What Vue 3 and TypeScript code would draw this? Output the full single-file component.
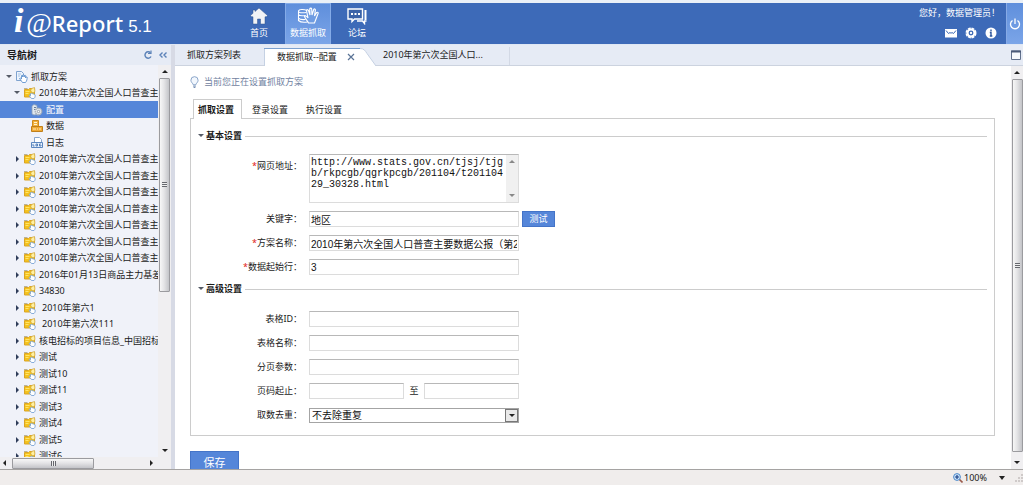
<script setup lang="ts">
import { ref } from 'vue'

interface TreeNode {
  label: string
  level: number
  icon: string
  state: 'open' | 'closed' | 'leaf'
  indent?: boolean
}

const censusName = '2010年第六次全国人口普查主'

const closed = (label: string, indent = false): TreeNode => ({
  label,
  level: 1,
  icon: 'folder',
  state: 'closed',
  indent,
})

const nodes: TreeNode[] = [
  { label: '抓取方案', level: 0, icon: 'root', state: 'open' },
  { label: censusName, level: 1, icon: 'folder', state: 'open' },
  { label: '配置', level: 2, icon: 'config', state: 'leaf' },
  { label: '数据', level: 2, icon: 'data', state: 'leaf' },
  { label: '日志', level: 2, icon: 'log', state: 'leaf' },
  ...Array.from({ length: 7 }, () => closed(censusName)),
  closed('2016年01月13日商品主力基差'),
  closed('34830'),
  closed('2010年第六1', true),
  closed('2010年第六次111', true),
  closed('核电招标的项目信息_中国招标'),
  closed('测试'),
  closed('测试10'),
  closed('测试11'),
  closed('测试3'),
  closed('测试4'),
  closed('测试5'),
  closed('测试6'),
]

const selected = ref(2)
const url = ref('http://www.stats.gov.cn/tjsj/tjgb/rkpcgb/qgrkpcgb/201104/t20110429_30328.html')
const keyword = ref('地区')
const planName = ref('2010年第六次全国人口普查主要数据公报（第2号）')
const startRow = ref('3')
const tableId = ref('')
const tableName = ref('')
const pageParam = ref('')
const pageFrom = ref('')
const pageTo = ref('')
const dedupe = ref('none')
</script>

<template>
  <div class="app">
    <svg class="defs" aria-hidden="true">
      <symbol id="i-folder" viewBox="0 0 12 12">
        <path d="M.5 2.500h4l1-1h5v8.500h-10z" fill="#f5c21c" stroke="#d9a425" />
        <path d="M1.500 4.500h4M1.500 6.500h3" stroke="#ffe468" fill="none" />
        <path d="M0 1.500h3.500" stroke="#b9b29a" fill="none" />
        <path d="M6.500 4l1-2.500L10.500.5l.5 4-2 1.500z" fill="#fff0a0" stroke="#cda23a" stroke-width=".7" />
        <path d="M5 8.500c1-.8 1.500.3 1.500.3V6.500c.7-.7 1.400 0 1.400 0l2.600.8c1 .4 1 3-.5 4.200H7.500z" fill="#fff" stroke="#6d9bd3" stroke-width=".8" />
      </symbol>
      <symbol id="i-root" viewBox="0 0 12 12">
        <path d="M.5.5h5l2 2v7h-7z" fill="#edf4fd" stroke="#7fa3cf" />
        <path d="M2 3h3M2 5h2" stroke="#a8c3e5" fill="none" />
        <path d="M3.500 7.500c1-1 2 .5 2 .5V4.500c.6-.7 1.200 0 1.200 0V6l.2-2c.6-.6 1.200 0 1.200 0v2l.4-1.500c.6-.5 1.100 0 1.100 0V7l.5-1c.8-.5 1.100.2 1.100.2 0 2-.4 3.800-1.700 5.300H6.500z" fill="#fff" stroke="#4f86c8" stroke-width=".8" />
      </symbol>
      <symbol id="i-config" viewBox="0 0 12 12">
        <path d="M1 2l2-1.500 3 1v9l-3 .5-2-1z" fill="#dfe7f0" stroke="#8ba0b8" stroke-width=".8" />
        <path d="M3 3.500h2M3 5.500h2" stroke="#667d98" />
        <circle cx="7.500" cy="7.500" r="3.200" fill="#e9edf2" stroke="#a9b1ba" stroke-width="1.400" stroke-dasharray="1.700 .5" />
        <circle cx="7.500" cy="7.500" r="1.200" fill="#fff" stroke="#6f7d8d" stroke-width=".7" />
      </symbol>
      <symbol id="i-data" viewBox="0 0 12 12">
        <path d="M1.500.5h6v7h-6z" fill="#f2b13c" stroke="#cf8a1d" />
        <path d="M3 2.500h3M3 4.500h3" stroke="#fff3cf" />
        <path d="M.5 6.500h11v5H.5z" fill="#f0aa35" stroke="#c07f1a" />
        <path d="M2 9h3M6 9h1M8 9h2" stroke="#ffe9b8" />
      </symbol>
      <symbol id="i-log" viewBox="0 0 12 12">
        <path d="M3.500.5h5l2 2v5h-7z" fill="#fff" stroke="#87a5cc" />
        <path d="M.5 5.500h11v5H.5z" fill="#eaf2fc" stroke="#5b87c0" />
        <path d="M2 7v2h1.500M5 7h1.500v2H5zM10 7H8.500v2H10V8" stroke="#396bad" fill="none" stroke-width=".8" />
      </symbol>
    </svg>

    <header class="topbar">
      <h1 class="logo"><span class="logo-i">i</span><span class="logo-at">@</span><span class="logo-name">Report</span><span class="logo-ver">5.1</span></h1>
      <nav class="nav" aria-label="主导航">
        <a href="#" class="nav-item">
          <svg class="nav-icon" viewBox="0 0 24 18">
            <path d="M12 1l8.500 7.500-1 1.300H18V17h-4.500v-5h-3v5H6V9.800H4.500l-1-1.300L6 6.300V3h2v1.500z" fill="#f1f3f6" stroke="#31558f" stroke-width=".5" />
          </svg>
          <span>首页</span>
        </a>
        <a href="#" class="nav-item active" aria-current="page">
          <svg class="nav-icon" viewBox="0 0 24 18" fill="none" stroke="#fff" stroke-width="1.100">
            <path d="M11 3.500C8 2 3 2 2.500 4s4 2 8 1.500M2.500 4.500v3c1 1.500 4 1.500 7 1M2.500 8v3c1 1.500 4 1.800 7 1.500M2.500 11.500v2c2 2 6 2 9 1.500" />
            <path d="M12.500 16c-1-2-3-4-4-6.500 1-1.300 2.300-.2 3.500 1.500L10.500 3.500c.5-1.200 1.600-1 2 0L14 8l-.3-6c.4-1.200 1.700-1.200 2 0L16 8l1.700-5.500c.6-1 1.700-.6 1.700.4L18.500 9l2.200-3.500c1-.7 1.800.1 1.400 1L20 12l-1.500 4z" fill="#6f9ce2" />
          </svg>
          <span>数据抓取</span>
        </a>
        <a href="#" class="nav-item">
          <svg class="nav-icon" viewBox="0 0 24 18" fill="none" stroke="#fff" stroke-width="1.400">
            <path d="M3 2h14.500v10H9.500L7 14.500V12H3z" fill="#3a62a8" />
            <path d="M20.500 3v10" stroke-width="2" />
            <path d="M12 14h5.500l2 2.500V14h2" />
            <path d="M6 7h2M9.500 7h2M13 7h2" stroke-width="1.800" />
          </svg>
          <span>论坛</span>
        </a>
      </nav>
      <div class="user">
        <p class="hello">您好，数据管理员！</p>
        <div class="user-tools">
          <button type="button" aria-label="消息">
            <svg viewBox="0 0 12 12"><path d="M0 2h12v8.500H0z" fill="#fff" /><path d="M1 3.500l2.500 3 1.500-1 1 .8 1-.8 1.500 1 2.500-3" fill="none" stroke="#3c69b6" /></svg>
          </button>
          <button type="button" aria-label="设置">
            <svg viewBox="0 0 12 12"><circle cx="6" cy="6" r="4.500" fill="#fff" /><circle cx="6" cy="6" r="4.800" fill="none" stroke="#fff" stroke-width="1.400" stroke-dasharray="2.900 .87" /><circle cx="6" cy="6" r="1.800" fill="#fff" stroke="#3c69b6" stroke-width="1.300" /></svg>
          </button>
          <button type="button" aria-label="关于">
            <svg viewBox="0 0 12 12"><circle cx="6" cy="6" r="5.500" fill="#fff" /><path d="M6 2.500v1.700M4.800 5.500H6V9M4.800 9h2.500" fill="none" stroke="#2c559d" stroke-width="1.400" /></svg>
          </button>
        </div>
      </div>
      <button type="button" class="power" aria-label="退出">
        <svg viewBox="0 0 12 12" fill="none" stroke="#fff" stroke-width="1.300"><path d="M3.500 2.500a4.500 4.500 0 1 0 5 0M6 .5v5.500" /></svg>
      </button>
    </header>

    <div class="body">
      <aside class="sidebar">
        <div class="side-head">
          <h2>导航树</h2>
          <button type="button" aria-label="刷新">
            <svg viewBox="0 0 10 10" fill="none" stroke="#5b82b8" stroke-width="1.400"><path d="M7.500 2.800A3.200 3.200 0 1 0 8 6.500" /><path d="M8 .5v3H5" stroke-width="1.200" /></svg>
          </button>
          <button type="button" aria-label="折叠">
            <svg viewBox="0 0 10 10" fill="none" stroke="#5b82b8" stroke-width="1.400"><path d="M4.500 2.500L2 5l2.500 2.500M8.500 2.500L6 5l2.500 2.500" /></svg>
          </button>
        </div>
        <div class="tree-area">
          <ul class="tree" role="tree" aria-label="导航树">
            <li
              v-for="(node, i) in nodes"
              :key="i"
              role="treeitem"
              :class="['node', 'level-' + node.level, { selected: i === selected }]"
              :aria-selected="i === selected"
              @click="selected = i"
            >
              <span :class="['twist', node.state]"></span>
              <svg class="node-icon"><use :href="'#i-' + node.icon" /></svg>
              <span :class="['node-label', { indent: node.indent }]">{{ node.label }}</span>
            </li>
          </ul>
          <div class="vbar" aria-hidden="true">
            <span class="arrow up"></span>
            <span class="thumb tree-thumb"></span>
            <span class="arrow down"></span>
          </div>
        </div>
        <div class="hbar" aria-hidden="true">
          <span class="arrow left"></span>
          <span class="thumb"></span>
          <span class="arrow right"></span>
        </div>
      </aside>
      <div class="splitter"></div>

      <main class="main">
        <div class="doc-tabs">
          <a href="#" class="doc-tab first">抓取方案列表</a>
          <div class="doc-tab current">
            <svg class="tab-shape" viewBox="0 0 112 18" preserveAspectRatio="none">
              <path d="M0 18V.5h96c4 0 5 2 7 5l9 12.500z" fill="#fff" />
              <path d="M.5 18V.5h95.500c4 0 5 2 7 5l9 12.500" fill="none" stroke="#c5d1e3" />
              <path d="M0 .5h96" stroke="#7ba0cf" />
            </svg>
            <a href="#">数据抓取--配置</a>
            <button type="button" aria-label="关闭标签">
              <svg viewBox="0 0 8 8"><path d="M1 1l6 6M7 1L1 7" stroke="#5a7396" stroke-width="1.200" /></svg>
            </button>
          </div>
          <a href="#" class="doc-tab last">2010年第六次全国人口...</a>
          <button type="button" class="maximize" aria-label="最大化">
            <svg viewBox="0 0 10 10"><path d="M.5 1h9v8.500h-9z" fill="#f7f9fc" stroke="#62718c" /><path d="M0 1.500h10" stroke="#4b5a78" stroke-width="2" /></svg>
          </button>
        </div>

        <div class="work">
          <form class="page" @submit.prevent>
            <p class="tip">
              <svg viewBox="0 0 10 14" fill="none" stroke="#7f9cc4"><path d="M3.500 9.500C3.500 8 1 7 1 4.500a4 4 0 0 1 8 0C9 7 6.500 8 6.500 9.500z" fill="#f2f7fd" /><path d="M3.500 11h3M4 12.500h2" stroke="#5f7da8" /></svg>
              当前您正在设置抓取方案
            </p>
            <div class="tabs" role="tablist">
              <button type="button" role="tab" class="tab on" aria-selected="true">抓取设置</button>
              <button type="button" role="tab" class="tab" aria-selected="false">登录设置</button>
              <button type="button" role="tab" class="tab" aria-selected="false">执行设置</button>
            </div>

            <div class="panel">
              <section class="group">
                <h3><span class="twist open"></span>基本设置</h3>
                <div class="fields">
                  <div class="row top">
                    <label for="url"><em>*</em>网页地址：</label>
                    <div class="field area">
                      <textarea id="url" v-model="url" spellcheck="false"></textarea>
                      <div class="area-bar" aria-hidden="true"><span class="arrow up"></span><span class="arrow down"></span></div>
                    </div>
                  </div>
                  <div class="row">
                    <label for="keyword">关键字：</label>
                    <input id="keyword" v-model="keyword" class="field" type="text" />
                    <button type="button" class="test">测试</button>
                  </div>
                  <div class="row">
                    <label for="plan"><em>*</em>方案名称：</label>
                    <input id="plan" v-model="planName" class="field" type="text" />
                  </div>
                  <div class="row">
                    <label for="start"><em>*</em>数据起始行：</label>
                    <input id="start" v-model="startRow" class="field" type="text" />
                  </div>
                </div>
              </section>

              <section class="group advanced">
                <h3><span class="twist open"></span>高级设置</h3>
                <div class="fields">
                  <div class="row">
                    <label for="tid">表格ID：</label>
                    <input id="tid" v-model="tableId" class="field" type="text" />
                  </div>
                  <div class="row">
                    <label for="tname">表格名称：</label>
                    <input id="tname" v-model="tableName" class="field" type="text" />
                  </div>
                  <div class="row">
                    <label for="pparam">分页参数：</label>
                    <input id="pparam" v-model="pageParam" class="field" type="text" />
                  </div>
                  <div class="row">
                    <label for="pfrom">页码起止：</label>
                    <div class="field range">
                      <input id="pfrom" v-model="pageFrom" type="text" />
                      <label for="pto">至</label>
                      <input id="pto" v-model="pageTo" type="text" />
                    </div>
                  </div>
                  <div class="row">
                    <label for="dedupe">取数去重：</label>
                    <div class="field pick">
                      <select id="dedupe" v-model="dedupe">
                        <option value="none">不去除重复</option>
                      </select>
                      <span class="pick-btn" aria-hidden="true"><span class="arrow down"></span></span>
                    </div>
                  </div>
                </div>
              </section>
            </div>
            <button type="submit" class="save">保存</button>
          </form>
          <div class="vbar page-bar" aria-hidden="true">
            <span class="arrow up"></span>
            <span class="thumb"></span>
            <span class="arrow down"></span>
          </div>
        </div>
      </main>
    </div>

    <footer class="status">
      <svg class="lens" viewBox="0 0 10 10"><path d="M6 6l3.500 3.500" stroke="#9a5a4a" stroke-width="1.600" /><circle cx="4" cy="4" r="3.400" fill="#cfe5fa" stroke="#4b87c8" /><path d="M2 4h4M4 2v4" stroke="#173f86" stroke-width="1.200" /></svg>
      <span>100%</span>
      <span class="arrow down big"></span>
      <svg class="grip" viewBox="0 0 10 10"><path d="M8 2h2M8 5h2M5 5h2M8 8h2M5 8h2M2 8h2" stroke="#c3bfbd" stroke-width="1.500" /></svg>
    </footer>
  </div>
</template>

<style>
body {
  margin: 0;
  overflow: hidden;
}
</style>

<style scoped>
* {
  box-sizing: border-box;
}

.app {
  display: flex;
  flex-direction: column;
  height: 100vh;
  background: #fff;
  color: #1a1a1a;
  font: 9px/16px "Noto Sans", "Noto Sans CJK SC", sans-serif;
}

.defs {
  position: absolute;
  width: 0;
  height: 0;
}

h1, h2, h3, p, ul {
  margin: 0;
  padding: 0;
  font-size: 9px;
  font-weight: normal;
  list-style: none;
}

a {
  color: inherit;
  text-decoration: none;
}

button {
  margin: 0;
  padding: 0;
  border: 0;
  background: none;
  color: inherit;
  font: inherit;
}

svg {
  display: block;
  flex: none;
}

/* top bar */
.topbar {
  display: flex;
  flex: none;
  height: 45px;
  border-top: 3px solid #eaf0f7;
  border-bottom: 1px solid #dfe7f4;
  background: #3d6ab8;
  color: #fff;
}

.logo {
  display: flex;
  align-items: baseline;
  width: 236px;
  padding-left: 14px;
  line-height: 36px;
}

.logo-i {
  width: 12px;
  font: italic bold 34px/36px "Liberation Serif", serif;
}

.logo-at {
  font: italic 28px/36px "Liberation Serif", serif;
}

.logo-name {
  font-size: 22px;
  font-weight: 500;
}

.logo-ver {
  margin-left: 5px;
  font: 17px/36px "Liberation Sans", sans-serif;
}

.nav {
  display: flex;
  flex: 1;
  gap: 3px;
}

.nav-item {
  display: flex;
  flex-direction: column;
  align-items: center;
  width: 46px;
  padding-top: 4px;
}

.nav-item.active {
  border: 1px solid #84abe8;
  border-width: 1px 1px 0;
  background: linear-gradient(#5f8fdc, #7ba5e8);
  padding-top: 3px;
}

.nav-icon {
  width: 24px;
  height: 18px;
}

.user {
  display: flex;
  flex-direction: column;
  align-items: flex-end;
  padding-right: 6px;
  padding-top: 2px;
}

.user-tools {
  display: flex;
  gap: 8px;
  padding: 6px 3px 0 0;
}

.user-tools svg {
  width: 12px;
  height: 12px;
}

.power {
  display: grid;
  place-items: center;
  width: 17px;
  border-left: 1px solid #86aae6;
  background: linear-gradient(#5f8fdc, #7ba5e8);
}

.power svg {
  width: 12px;
  height: 12px;
}

/* frame */
.body {
  display: flex;
  flex: 1;
  min-height: 0;
}

.sidebar {
  display: flex;
  flex: none;
  flex-direction: column;
  width: 171px;
  background: #f0f2f9;
}

.side-head {
  display: flex;
  flex: none;
  align-items: center;
  gap: 5px;
  height: 20px;
  padding: 0 3px 0 7px;
  background: #e6ebf5;
}

.side-head h2 {
  flex: 1;
  font-size: 10px;
  font-weight: bold;
}

.side-head svg {
  width: 10px;
  height: 10px;
}

.splitter {
  flex: none;
  width: 4px;
  background: #d7dae5;
}

.tree-area {
  display: flex;
  flex: 1;
  min-height: 0;
}

.tree {
  flex: 1;
  min-width: 0;
  padding-top: 3px;
  overflow: hidden;
}

.node {
  display: flex;
  align-items: center;
  height: 16px;
  white-space: nowrap;
  cursor: default;
}

.node:nth-child(odd) {
  height: 17px;
}

.level-0 {
  padding-left: 6px;
}

.level-1 {
  padding-left: 14px;
}

.level-2 {
  padding-left: 21px;
}

.selected {
  background: #5586d9;
  color: #fff;
}

.node-icon {
  width: 12px;
  height: 12px;
  margin: 0 3px 0 4px;
}

.node-label.indent {
  padding-left: 3px;
}

.twist {
  flex: none;
  width: 6px;
  height: 6px;
}

.twist.open::before,
.twist.closed::before {
  display: block;
  width: 0;
  height: 0;
  border: 3px solid transparent;
  content: "";
}

.twist.open::before {
  margin-top: 1px;
  border-top-color: #555b66;
  border-bottom: 0;
}

.twist.closed::before {
  margin-left: 2px;
  border-left-color: #2f3d5a;
  border-right: 0;
}

/* scroll bars */
.vbar {
  display: flex;
  flex: none;
  flex-direction: column;
  align-items: center;
  width: 13px;
  padding: 5px 0;
  background: #f0eff1;
}

.vbar .down {
  margin-top: auto;
}

.thumb {
  display: grid;
  place-items: center;
  border: 1px solid #9b9b9f;
  border-radius: 1px;
  background: linear-gradient(90deg, #f7f7f7, #e4e4e6 45%, #c3c4c8);
}

.thumb::before {
  width: 5px;
  height: 5px;
  background: repeating-linear-gradient(#66686e 0 1px, #eee 1px 2px);
  content: "";
}

.vbar .thumb {
  width: 11px;
  margin-top: 5px;
}

.tree-thumb {
  height: 56%;
}

.page-bar {
  width: 12px;
}

.page-bar .thumb {
  flex: 1;
  margin-bottom: 9px;
}

.arrow {
  flex: none;
  width: 0;
  height: 0;
  border: 3px solid transparent;
}

.arrow.up {
  border-top: 0;
  border-bottom-color: #222;
}

.arrow.down {
  border-bottom: 0;
  border-top-color: #222;
}

.arrow.left {
  border-left: 0;
  border-right-color: #222;
}

.arrow.right {
  border-right: 0;
  border-left-color: #222;
}

.hbar {
  display: flex;
  flex: none;
  align-items: center;
  height: 12px;
  padding: 0 18px 0 3px;
  background: #f0eff1;
}

.hbar .thumb {
  width: 82px;
  height: 11px;
  margin: 0 auto 0 6px;
  background: linear-gradient(#f7f7f7, #e4e4e6 45%, #c3c4c8);
}

.hbar .thumb::before {
  background: repeating-linear-gradient(90deg, #66686e 0 1px, #eee 1px 2px);
}

/* document tabs */
.main {
  display: flex;
  flex: 1;
  flex-direction: column;
  min-width: 0;
}

.doc-tabs {
  display: flex;
  flex: none;
  align-items: flex-end;
  height: 21px;
  border-bottom: 1px solid #ccd3df;
  background: #e6ebf5;
}

.doc-tab {
  height: 18px;
}

.doc-tab.first {
  width: 89px;
  padding-left: 12px;
}

.doc-tab.current {
  display: flex;
  position: relative;
  align-items: center;
  gap: 10px;
  width: 112px;
  height: 18px;
  margin-bottom: -1px;
  padding-left: 13px;
}

.tab-shape {
  position: absolute;
  inset: 0;
  width: 100%;
  height: 100%;
}

.doc-tab.current a,
.doc-tab.current button {
  position: relative;
}

.doc-tab.current button svg {
  width: 8px;
  height: 8px;
}

.doc-tab.last {
  width: 134px;
  padding-left: 7px;
  border-right: 1px solid #d3d9e5;
}

.maximize {
  margin: 0 2px 5px auto;
}

.maximize svg {
  width: 10px;
  height: 10px;
}

/* working area */
.work {
  display: flex;
  flex: 1;
  min-height: 0;
}

.page {
  flex: 1;
  min-width: 0;
  padding: 8px 16px 0 15px;
  overflow: hidden;
}

.tip {
  display: flex;
  align-items: center;
  gap: 5px;
  color: #71829f;
}

.tip svg {
  width: 9px;
  height: 13px;
}

.tabs {
  display: flex;
  position: relative;
  gap: 5px;
  margin: 9px 0 -1px 3px;
}

.tab {
  width: 49px;
  height: 20px;
  padding-right: 3px;
  border: 1px solid transparent;
  border-bottom: 0;
}

.tab.on {
  border-color: #ccc;
  background: #fff;
  font-weight: bold;
}

.panel {
  padding: 9px 7px 12px;
  border: 1px solid #ccc;
}

.group h3 {
  display: flex;
  align-items: center;
  gap: 2px;
  font-weight: bold;
}

.group h3::after {
  flex: 1;
  height: 1px;
  margin-left: 1px;
  background: #ccc;
  content: "";
}

.fields {
  display: grid;
  gap: 8px;
  padding-top: 10px;
}

.advanced {
  margin-top: 6px;
}

.advanced .fields {
  padding-top: 14px;
}

.row {
  display: flex;
  align-items: center;
  height: 16px;
}

.row > label {
  width: 104px;
  margin-right: 7px;
  text-align: right;
}

.row.top {
  align-items: flex-start;
  height: 49px;
}

.row.top > label {
  line-height: 24px;
}

em {
  color: #e02020;
  font-style: normal;
}

.field {
  width: 210px;
}

input,
textarea,
select {
  margin: 0;
  border: 1px solid #dcdcdc;
  border-top-color: #b8b8b8;
  border-radius: 0;
  outline: 0;
  background: #fff;
  color: #111;
  font: 10px/14px "Liberation Sans", "Noto Sans CJK SC", sans-serif;
}

input {
  height: 16px;
  padding: 0 1px;
}

.area {
  display: flex;
  height: 49px;
  border: 1px solid #dcdcdc;
  border-top-color: #b8b8b8;
}

textarea {
  flex: 1;
  min-width: 0;
  padding: 2px 1px;
  border: 0;
  font: 10px/11px "Liberation Mono", monospace;
  word-break: break-all;
  resize: none;
  overflow: hidden;
}

.area-bar {
  display: flex;
  flex-direction: column;
  align-items: center;
  justify-content: space-between;
  width: 12px;
  padding: 5px 0;
  background: #f0f0f0;
}

.area-bar .up {
  border-bottom-color: #888;
}

.area-bar .down {
  border-top-color: #888;
}

.test {
  width: 33px;
  height: 16px;
  margin-left: 3px;
  border: 1px solid #4474c8;
  background: #5586d9;
  color: #fff;
  line-height: 14px;
}

.range {
  display: flex;
  align-items: center;
}

.range input {
  flex: 1;
  min-width: 0;
}

.range label {
  width: 20px;
  text-align: center;
}

.pick {
  display: flex;
  position: relative;
}

select {
  width: 100%;
  height: 15px;
  padding: 0 2px;
  border-color: #a4a4a4;
  appearance: none;
}

.pick-btn {
  display: grid;
  position: absolute;
  top: 1px;
  right: 1px;
  bottom: 1px;
  place-items: center;
  width: 13px;
  border: 1px solid #777;
  background: #e9e9e9;
  pointer-events: none;
}

.save {
  display: block;
  width: 49px;
  height: 23px;
  margin-top: 15px;
  border: 1px solid #4474c8;
  background: #5586d9;
  color: #fff;
  font-size: 11px;
}

/* status bar */
.status {
  display: flex;
  flex: none;
  align-items: center;
  justify-content: flex-end;
  height: 16px;
  border-top: 1px solid #a5a3a2;
  background: #f0edec;
}

.lens {
  width: 10px;
  height: 10px;
  margin-right: 1px;
}

.status .big {
  margin: 0 8px 0 12px;
  border-width: 4px 3px 0;
}

.grip {
  width: 10px;
  height: 10px;
}
</style>
